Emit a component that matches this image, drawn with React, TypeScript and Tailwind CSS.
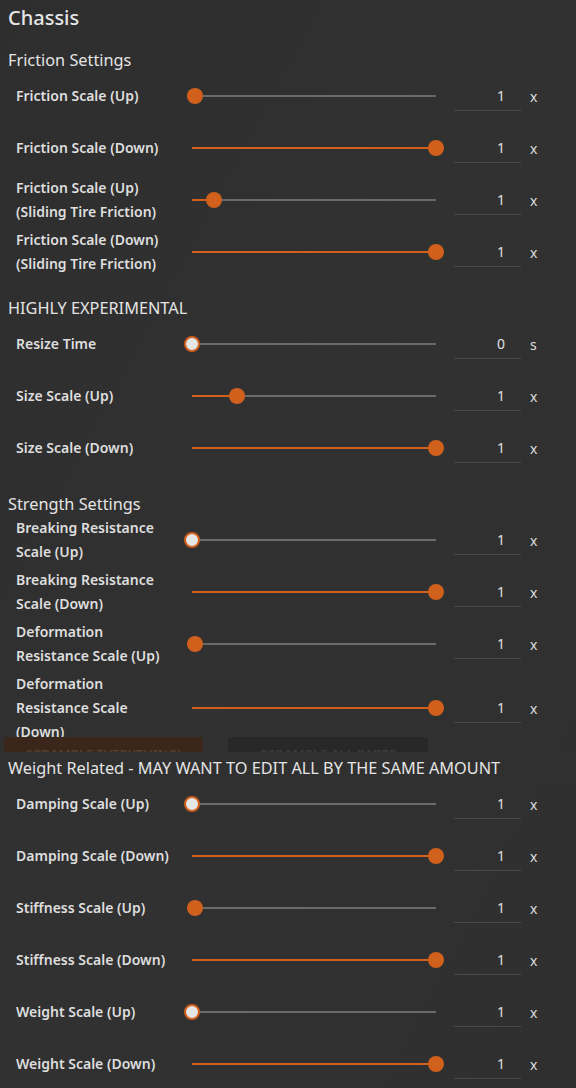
import React from 'react';

type Row = {
  label: string[];
  pos: number; // 0..1 along the track
  white?: boolean;
  value: string;
  unit: string;
};

const TRACK = 244;

const friction: Row[] = [
  { label: ['Friction Scale (Up)'], pos: 3 / TRACK, value: '1', unit: 'x' },
  { label: ['Friction Scale (Down)'], pos: 1, value: '1', unit: 'x' },
  { label: ['Friction Scale (Up)', '(Sliding Tire Friction)'], pos: 22 / TRACK, value: '1', unit: 'x' },
  { label: ['Friction Scale (Down)', '(Sliding Tire Friction)'], pos: 1, value: '1', unit: 'x' },
];

const experimental: Row[] = [
  { label: ['Resize Time'], pos: 0, white: true, value: '0', unit: 's' },
  { label: ['Size Scale (Up)'], pos: 45 / TRACK, value: '1', unit: 'x' },
  { label: ['Size Scale (Down)'], pos: 1, value: '1', unit: 'x' },
];

const strength: Row[] = [
  { label: ['Breaking Resistance', 'Scale (Up)'], pos: 0, white: true, value: '1', unit: 'x' },
  { label: ['Breaking Resistance', 'Scale (Down)'], pos: 1, value: '1', unit: 'x' },
  { label: ['Deformation', 'Resistance Scale (Up)'], pos: 3 / TRACK, value: '1', unit: 'x' },
  { label: ['Deformation', 'Resistance Scale', '(Down)'], pos: 1, value: '1', unit: 'x' },
];

const weight: Row[] = [
  { label: ['Damping Scale (Up)'], pos: 0, white: true, value: '1', unit: 'x' },
  { label: ['Damping Scale (Down)'], pos: 1, value: '1', unit: 'x' },
  { label: ['Stiffness Scale (Up)'], pos: 3 / TRACK, value: '1', unit: 'x' },
  { label: ['Stiffness Scale (Down)'], pos: 1, value: '1', unit: 'x' },
  { label: ['Weight Scale (Up)'], pos: 0, white: true, value: '1', unit: 'x' },
  { label: ['Weight Scale (Down)'], pos: 1, value: '1', unit: 'x' },
];

const Slider: React.FC<{ pos: number; white?: boolean }> = ({ pos, white }) => {
  const px = pos * TRACK;
  return (
    <div className="relative h-4">
      <div className="absolute left-0 right-0 top-[7px] h-[2px] bg-[#6a6a6a]" />
      <div className="absolute left-0 top-[7px] h-[2px] bg-[#d0601b]" style={{ width: px }} />
      <div
        className={
          white
            ? 'absolute top-0 w-4 h-4 -ml-2 rounded-full bg-[#e6e6e6] border-2 border-[#d0601b]'
            : 'absolute top-0 w-4 h-4 -ml-2 rounded-full bg-[#d0601b]'
        }
        style={{ left: px }}
      />
    </div>
  );
};

const SettingRow: React.FC<{ row: Row }> = ({ row }) => (
  <div className="grid grid-cols-[192px_244px_18px_67px_1fr] items-center min-h-[52px]">
    <div className="pl-4 py-[2px] text-[14px] font-semibold leading-[24px] text-[#dedede]">
      {row.label.map((l, i) => (
        <div key={i}>{l}</div>
      ))}
    </div>
    <Slider pos={row.pos} white={row.white} />
    <div />
    <div className="h-[30px] flex items-center justify-end pr-4 border-b border-[#4a4a4a] text-[14px] text-[#e0e0e0]">
      {row.value}
    </div>
    <div className="pl-[9px] text-[14px] text-[#dedede]">{row.unit}</div>
  </div>
);

const Heading: React.FC<{ children: React.ReactNode; className?: string }> = ({ children, className }) => (
  <div className={`px-2 text-[16.3px] leading-[20px] text-[#e4e4e4] ${className ?? ''}`}>{children}</div>
);

export default function App() {
  return (
    <div
      className="w-[576px] h-[1088px] overflow-hidden bg-gradient-to-br from-[#2e2e2e] via-[#313131] to-[#2f2f2f]"
      style={{ fontFamily: '"Noto Sans", "Open Sans", sans-serif' }}
    >
      <div className="h-[36px] pt-[4px] px-2 text-[20px] leading-[28px] font-medium text-[#e6e6e6]">Chassis</div>
      <Heading className="pt-[14px]">Friction Settings</Heading>
      {friction.map((r, i) => (
        <SettingRow key={i} row={r} />
      ))}
      <Heading className="pt-[20px]">HIGHLY EXPERIMENTAL</Heading>
      {experimental.map((r, i) => (
        <SettingRow key={i} row={r} />
      ))}
      <Heading className="pt-[20px]">Strength Settings</Heading>
      {strength.map((r, i) => (
        <SettingRow key={i} row={r} />
      ))}
      <div className="-mt-[9px] h-[15px] overflow-hidden flex">
        <div className="ml-1 w-[199px] h-[40px] rounded-t-[3px] bg-[#3a261b] pt-[8px] text-center text-[13px] font-semibold text-[#56402f]">
          SCRAMBLE EVERYTHING!
        </div>
        <div className="ml-[25px] w-[200px] h-[40px] rounded-t-[3px] bg-[#282828] pt-[8px] text-center text-[13px] font-semibold text-[#3c3c3c]">
          SCRAMBLE ALL PARTS
        </div>
      </div>
      <Heading className="pt-[6px] bg-[#303030]">Weight Related - MAY WANT TO EDIT ALL BY THE SAME AMOUNT</Heading>
      {weight.map((r, i) => (
        <SettingRow key={i} row={r} />
      ))}
    </div>
  );
}
